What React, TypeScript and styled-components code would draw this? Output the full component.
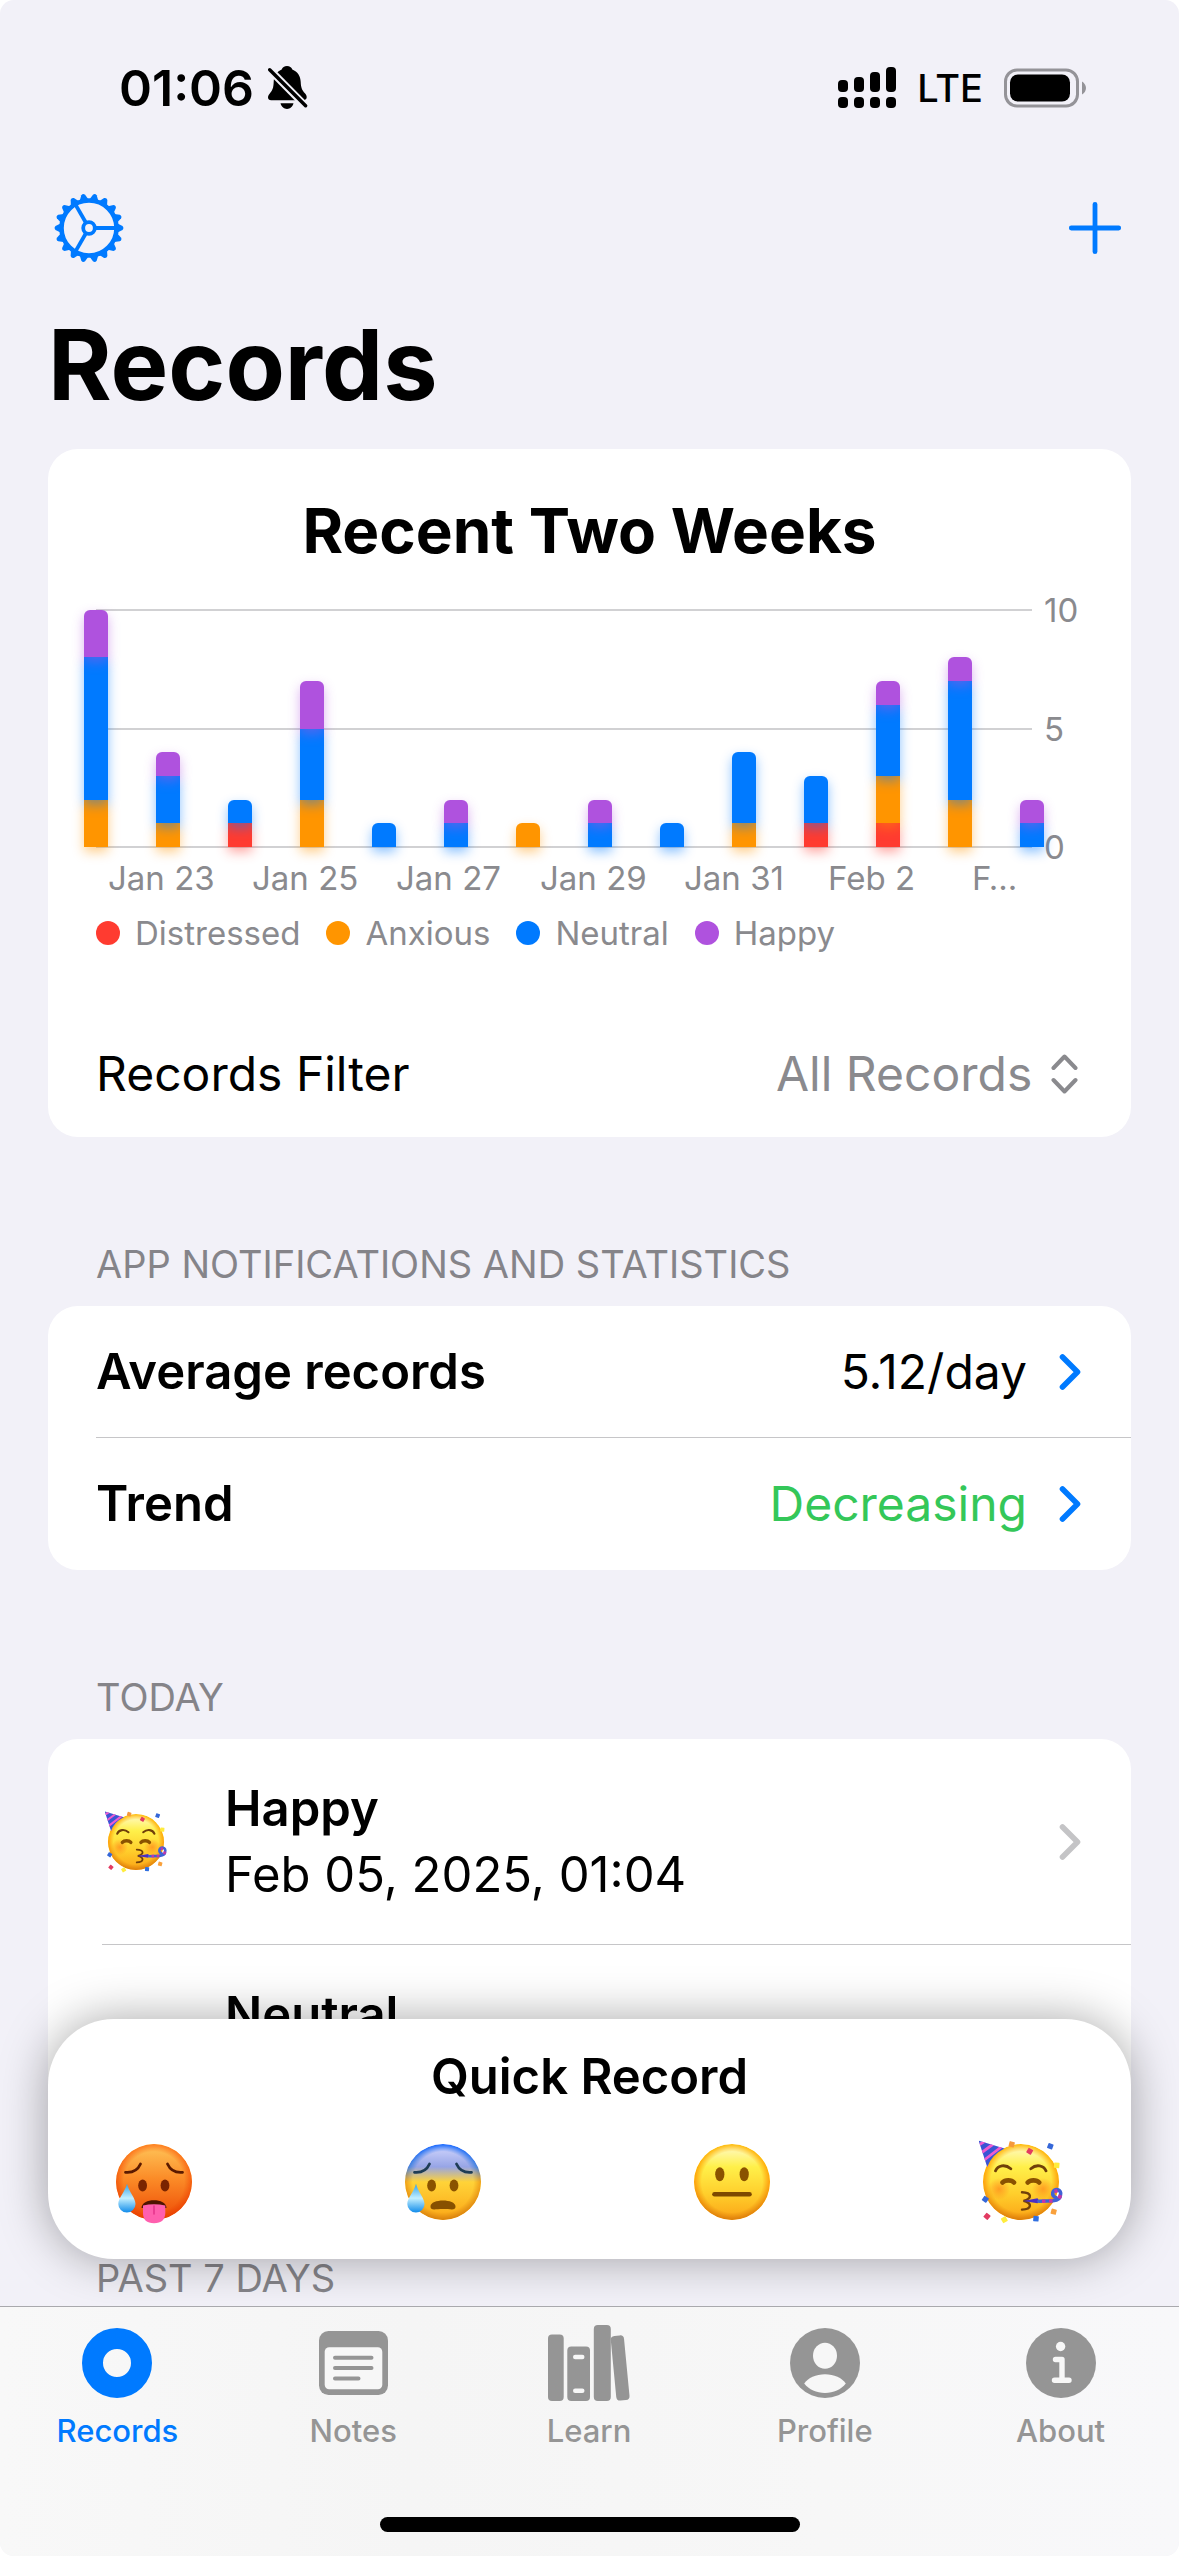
import React, { useId } from "react";
import styled, { createGlobalStyle } from "styled-components";

const color = {
  page: "#f2f1f8",
  card: "#ffffff",
  ink: "#000000",
  secondary: "#8a8a8e",
  tint: "#007aff",
  green: "#34c759",
  line: "#c6c6c8",
  chevron: "#c4c4c6",
  tab: "#959595",
  bar: "#f7f7f7",
};

const GlobalStyle = createGlobalStyle`
  * { box-sizing: border-box; }
  body {
    margin: 0;
    background: #ffffff;
    font-family: Inter, "Liberation Sans", sans-serif;
    color: ${color.ink};
  }
  h1, h2, p { margin: 0; }
  svg { display: block; flex: none; }
`;

const Screen = styled.div`
  position: relative;
  height: 100vh;
  overflow: hidden;
  border-radius: 14px;
  background: ${color.page};
`;

const StatusBar = styled.div`
  display: flex;
  align-items: center;
  justify-content: space-between;
  height: 176px;
  padding: 0 93px 0 119px;
`;

const StatusGroup = styled.div<{ $gap: number }>`
  display: flex;
  align-items: center;
  gap: ${(p) => p.$gap}px;
`;

const Clock = styled.span`
  font-size: 50px;
  font-weight: 600;
  line-height: 60px;
`;

const Carrier = styled.span`
  font-size: 38px;
  font-weight: 500;
  line-height: 60px;
`;

const Toolbar = styled.div`
  display: flex;
  align-items: center;
  justify-content: space-between;
  height: 104px;
  padding: 0 54px;
`;

const IconButton = styled.button`
  display: flex;
  padding: 0;
  border: 0;
  background: none;
  color: ${color.tint};
  cursor: pointer;
`;

const PageTitle = styled.h1`
  margin: 0 48px;
  padding: 25px 0 24px;
  font-size: 97px;
  font-weight: 700;
  line-height: 120px;
`;

const Card = styled.section`
  margin: 0 48px;
  border-radius: 30px;
  background: ${color.card};
`;

const ChartBlock = styled.div`
  padding: 42px 36px 58px;
`;

const ChartTitle = styled.h2`
  margin-bottom: 39px;
  font-size: 62px;
  font-weight: 700;
  line-height: 80px;
  text-align: center;
`;

const ChartGrid = styled.div`
  display: grid;
  grid-template-columns: 1fr 51px;
`;

const Plot = styled.div`
  display: grid;
  height: 237px;
  > * { grid-area: 1 / 1; }
`;

const GridLines = styled.div`
  display: flex;
  flex-direction: column;
  justify-content: space-between;
  margin: -1px 12px;
`;

const GridLine = styled.div`
  height: 2px;
  background: #d1d1d3;
`;

const Bars = styled.div`
  display: flex;
  align-items: flex-end;
  justify-content: space-between;
`;

const Bar = styled.div`
  display: flex;
  flex-direction: column-reverse;
  isolation: isolate;
  width: 24px;
`;

const Segment = styled.div<{ $fill: string; $glow: string; $level: number }>`
  z-index: ${(p) => p.$level};
  background: ${(p) => p.$fill};
  box-shadow: 0 5px 12px ${(p) => p.$glow};
  &:last-child { border-radius: 6px 6px 0 0; }
`;

const YAxis = styled.div`
  display: flex;
  flex-direction: column;
  justify-content: space-between;
  margin: -20px 0;
  color: ${color.secondary};
  font-size: 33px;
  line-height: 40px;
`;

const XAxis = styled.div`
  display: grid;
  grid-template-columns: repeat(13, 1fr);
  margin: 11px 12px 0;
  color: ${color.secondary};
  font-size: 33px;
  line-height: 40px;
`;

const XLabel = styled.span<{ $span: number }>`
  grid-column: span ${(p) => p.$span};
  padding-left: 12px;
  white-space: nowrap;
`;

const Legend = styled.div`
  display: flex;
  gap: 26px;
  margin: 15px 12px 0;
`;

const LegendItem = styled.span`
  display: flex;
  align-items: center;
  gap: 15px;
  color: ${color.secondary};
  font-size: 33px;
  line-height: 40px;
`;

const Dot = styled.span<{ $fill: string }>`
  width: 24px;
  height: 24px;
  border-radius: 50%;
  background: ${(p) => p.$fill};
`;

const FilterRow = styled.div`
  display: flex;
  align-items: center;
  justify-content: space-between;
  height: 126px;
  padding: 0 53px 0 48px;
  font-size: 48px;
  line-height: 60px;
`;

const SelectBox = styled.span`
  display: flex;
  align-items: center;
  gap: 18px;
  color: ${color.secondary};
`;

const Select = styled.select`
  appearance: none;
  padding: 0;
  border: 0;
  background: none;
  color: inherit;
  font: inherit;
`;

const SectionHeader = styled.h2`
  padding: 103px 96px 18px;
  color: #858489;
  font-size: 38px;
  font-weight: 400;
  line-height: 48px;
`;

const StatRow = styled.a`
  display: flex;
  align-items: center;
  height: 132px;
  margin-left: 48px;
  padding-right: 50px;
  color: ${color.ink};
  font-size: 48px;
  line-height: 60px;
  text-decoration: none;
  &:not(:last-child) { border-bottom: 1px solid ${color.line}; }
`;

const StatName = styled.span`
  flex: 1;
  font-size: 49px;
  font-weight: 600;
`;

const StatValue = styled.span<{ $color?: string }>`
  margin-right: 32px;
  color: ${(p) => p.$color ?? color.ink};
`;

const RecordRow = styled.a`
  display: flex;
  align-items: center;
  height: 206px;
  margin-left: 54px;
  padding: 0 50px 0 3px;
  color: ${color.ink};
  text-decoration: none;
  &:not(:last-child) { border-bottom: 1px solid ${color.line}; }
`;

const RecordText = styled.span`
  display: flex;
  flex: 1;
  flex-direction: column;
  min-height: 132px;
  margin-left: 58px;
  font-size: 49px;
  line-height: 66px;
`;

const RecordName = styled.span`
  font-weight: 600;
`;

const Dock = styled.div`
  position: absolute;
  right: 0;
  bottom: 0;
  left: 0;
`;

const QuickCard = styled.section`
  margin: 0 48px 47px;
  height: 240px;
  padding-top: 28px;
  border-radius: 66px;
  background: ${color.card};
  box-shadow: 0 0 48px rgba(0, 0, 0, 0.35);
`;

const QuickTitle = styled.h2`
  font-size: 49px;
  font-weight: 600;
  line-height: 60px;
  text-align: center;
`;

const QuickChoices = styled.div`
  display: flex;
  justify-content: space-between;
  padding: 33px 68px 0 64px;
`;

const TabBar = styled.div`
  height: 250px;
  border-top: 1px solid #a9a9ad;
  background: linear-gradient(90deg, #f8f8f8, #f5f5f5 35%, #f7f7f7 70%, #f8f8fa);
`;

const Tabs = styled.nav`
  display: grid;
  grid-template-columns: repeat(5, 1fr);
`;

const Tab = styled.a<{ $active?: boolean }>`
  display: flex;
  flex-direction: column;
  align-items: center;
  padding: 16px 1px 0 0;
  color: ${(p) => (p.$active ? color.tint : color.tab)};
  font-size: 31px;
  font-weight: 500;
  line-height: 40px;
  text-decoration: none;
`;

const TabIcon = styled.span`
  display: flex;
  align-items: center;
  height: 80px;
  margin-bottom: 8px;
`;

const HomeIndicator = styled.div`
  width: 420px;
  height: 15px;
  margin: 66px auto 0;
  border-radius: 8px;
  background: #000;
`;

/* ---------- data ---------- */

type Mood = "distressed" | "anxious" | "neutral" | "happy";

const moods: { key: Mood; label: string; fill: string; glow: string }[] = [
  { key: "distressed", label: "Distressed", fill: "#ff3b30", glow: "rgba(255,59,48,.45)" },
  { key: "anxious", label: "Anxious", fill: "#ff9500", glow: "rgba(255,149,0,.45)" },
  { key: "neutral", label: "Neutral", fill: "#007aff", glow: "rgba(0,122,255,.45)" },
  { key: "happy", label: "Happy", fill: "#af52de", glow: "rgba(175,82,222,.45)" },
];

// One entry per day, counts in the order of `moods`.
const days = [
  [0, 2, 6, 2],
  [0, 1, 2, 1],
  [1, 0, 1, 0],
  [0, 2, 3, 2],
  [0, 0, 1, 0],
  [0, 0, 1, 1],
  [0, 1, 0, 0],
  [0, 0, 1, 1],
  [0, 0, 1, 0],
  [0, 1, 3, 0],
  [1, 0, 2, 0],
  [1, 2, 3, 1],
  [0, 2, 5, 1],
  [0, 0, 1, 1],
];

const MAX_COUNT = 10;
const PLOT_HEIGHT = 237;

const dateLabels = ["Jan 23", "Jan 25", "Jan 27", "Jan 29", "Jan 31", "Feb 2", "F…"];

/* ---------- icons ---------- */

const BellOff = () => (
  <svg width="40" height="44" viewBox="0 0 40 44">
    <path
      d="M19 0c2.600 0 4.600 1.500 5.300 3.400 5.300 2 8.200 6.800 8.400 12.300.2 6.300 1.500 8.500 4.200 11.600 1.300 1.500 1.800 2.700 1.800 4 0 1.700-1.300 2.900-3.400 2.900H3.200C1.200 34.200 0 33 0 31.400c0-1.500.6-2.600 1.800-4 2.600-3 3.700-5.300 3.900-11.700.2-5.500 2.900-10.300 8-12.300C14.400 1.500 16.400 0 19 0Z"
      fill="#000"
    />
    <path d="M12.500 37.300h13c-.8 3.400-3.300 5.600-6.500 5.600s-5.700-2.200-6.500-5.600Z" fill="#000" />
    <path d="M0 2 40 42.500" stroke={color.page} strokeWidth="7.500" />
    <path d="M1.700 3.800 37.600 39.800" stroke="#000" strokeWidth="3.400" strokeLinecap="round" />
  </svg>
);

const Signal = () => (
  <svg width="58" height="42" viewBox="0 0 58 42" fill="#000">
    {[13, 10, 5, 0].map((top, i) => (
      <g key={top}>
        <rect x={i * 16} y={top} width="10" height={25 - top} rx="4" />
        <rect x={i * 16} y="30" width="10" height="11" rx="4" />
      </g>
    ))}
  </svg>
);

const Battery = () => (
  <svg width="82" height="40" viewBox="0 0 82 40">
    <rect x="1.500" y="2" width="72" height="36" rx="11.500" fill="none" stroke="#949398" strokeWidth="3" />
    <rect x="6" y="6.500" width="60" height="27" rx="8" fill="#000" />
    <path d="M78 13.500c2.500 1.500 4 4 4 6.500s-1.500 5-4 6.500Z" fill="#949398" />
  </svg>
);

const Gear = () => (
  <svg width="70" height="70" viewBox="-35 -35 70 70" fill="none" stroke="currentColor">
    <circle r="27.500" strokeWidth="4.600" />
    <circle r="5.800" strokeWidth="3.800" />
    {[0, 120, 240].map((a) => (
      <path key={a} d="M7 0H27" strokeWidth="3.800" transform={`rotate(${a})`} />
    ))}
    {Array.from({ length: 18 }, (_, i) => (
      <path
        key={i}
        d="M28.500-4.400 33.500-1.900Q35.300 0 33.500 1.900L28.500 4.400Z"
        fill="currentColor"
        stroke="none"
        transform={`rotate(${i * 20})`}
      />
    ))}
  </svg>
);

const Plus = () => (
  <svg width="60" height="60" viewBox="-30 -30 60 60">
    <path d="M-23.700 0H23.700M0-23.700V23.700" stroke="currentColor" strokeWidth="4.800" strokeLinecap="round" />
  </svg>
);

const UpDown = () => (
  <svg width="27" height="40" viewBox="0 0 27 40" fill="none" stroke="currentColor" strokeWidth="4" strokeLinecap="round" strokeLinejoin="round">
    <path d="M2.500 14 13.500 2.500 24.500 14M2.500 26 13.500 37.500 24.500 26" />
  </svg>
);

const Chevron = ({ stroke }: { stroke: string }) => (
  <svg width="22" height="38" viewBox="0 0 22 38" fill="none" stroke={stroke} strokeWidth="5.600" strokeLinecap="round" strokeLinejoin="round">
    <path d="M3.500 4 18.500 19 3.500 34" />
  </svg>
);

const RecordsIcon = () => (
  <svg width="70" height="70" viewBox="0 0 70 70">
    <circle cx="35" cy="35" r="24.500" fill="none" stroke="currentColor" strokeWidth="21" />
  </svg>
);

const NotesIcon = () => (
  <svg width="69" height="64" viewBox="0 0 69 64">
    <rect width="69" height="64" rx="9.500" fill="currentColor" />
    <rect x="5.700" y="16.300" width="57.600" height="42" rx="4.500" fill={color.bar} />
    <path d="M16 26.700H52.500M16 37H52.500M16 47.500H39.500" stroke="currentColor" strokeWidth="4" strokeLinecap="round" />
  </svg>
);

const LearnIcon = () => (
  <svg width="82" height="76" viewBox="0 0 82 76" fill="currentColor">
    <rect y="9.500" width="15.700" height="66.500" rx="4" />
    <rect x="19.300" y="21.500" width="22.700" height="54.500" rx="4" />
    <rect x="45.800" width="17" height="76" rx="4" />
    <rect x="65.500" y="10.500" width="13.300" height="65" rx="4" transform="rotate(-5.500 72 43)" />
    <rect x="25" y="29.800" width="11.500" height="4.400" rx="2.200" fill={color.bar} />
    <rect x="25" y="63.600" width="11.500" height="4.400" rx="2.200" fill={color.bar} />
  </svg>
);

const ProfileIcon = () => (
  <svg width="70" height="70" viewBox="0 0 70 70">
    <circle cx="35" cy="35" r="35" fill="currentColor" />
    <ellipse cx="35" cy="27.800" rx="12" ry="13" fill={color.bar} />
    <path d="M14.200 55.500C18 50 26 46.300 35 46.300S52 50 55.800 55.500C51 61.500 43.500 65 35 65S19 61.500 14.200 55.500Z" fill={color.bar} />
  </svg>
);

const AboutIcon = () => (
  <svg width="70" height="70" viewBox="0 0 70 70">
    <circle cx="35" cy="35" r="35" fill="currentColor" />
    <circle cx="34.600" cy="18.500" r="4.700" fill={color.bar} />
    <path d="M29.500 31.500H36V52.300M28.500 52.300H43" fill="none" stroke={color.bar} strokeWidth="5.400" strokeLinecap="round" strokeLinejoin="round" />
  </svg>
);

/* ---------- mood faces ---------- */

const faceStops: Record<Mood, [string, string][]> = {
  distressed: [["0", "#ffc65a"], [".45", "#fb8c28"], ["1", "#ee4a05"]],
  anxious: [["0", "#d5d9ff"], [".3", "#97a5e6"], [".5", "#ffd338"], ["1", "#fba616"]],
  neutral: [["0", "#fffbd0"], [".3", "#fff04a"], [".65", "#ffcf2c"], ["1", "#fba316"]],
  happy: [["0", "#fffbd0"], [".3", "#fff04a"], [".65", "#ffcf2c"], ["1", "#fba316"]],
};

const rimStops: Record<Mood, [string, string][]> = {
  distressed: [["0", "#ff7a20"], ["1", "#e83e00"]],
  anxious: [["0", "#0a62ff"], [".3", "#3f82dd"], [".5", "#f09f1a"], ["1", "#d57f0e"]],
  neutral: [["0", "#ffb700"], [".5", "#ff9d0c"], ["1", "#d97c0b"]],
  happy: [["0", "#ffb700"], [".5", "#ff9d0c"], ["1", "#d97c0b"]],
};

const confetti: [number, number, string, number][] = [
  [32.7, 4.3, "#f5993c", 15],
  [50.7, 11.3, "#e23b62", 30],
  [71.3, 6.3, "#3567d8", 20],
  [77.7, 25.3, "#ffec3d", 5],
  [6.3, 59.3, "#3567d8", 35],
  [8, 76.3, "#e23b62", 40],
  [25.3, 79.7, "#ffec3d", 60],
  [57, 78.7, "#2f6fe0", 5],
  [74.7, 71.7, "#f9a13c", 15],
];

const Drop = ({ fill }: { fill: string }) => (
  <path d="M15 43.800C17 52 23.500 58 23.500 64A8.600 8.600 0 0 1 6.300 64C6.300 58 13 52 15 43.800Z" fill={fill} />
);

const WorriedBrows = ({ stroke }: { stroke: string }) => (
  <path
    d="M13.500 32.300C21 33 26 29.500 28.500 24M55.500 24C58 29.500 63 33 70.500 32.300"
    fill="none"
    stroke={stroke}
    strokeWidth="2.800"
    strokeLinecap="round"
  />
);

const Face = ({ mood, size }: { mood: Mood; size: number }) => {
  const id = useId();
  const ref = (name: string) => `url(#${id}${name})`;
  return (
    <svg width={size} height={size} viewBox="0 0 84 84" role="img" aria-label={mood}>
      <defs>
        <linearGradient id={`${id}face`} x2="0" y2="1">
          {faceStops[mood].map(([o, c]) => <stop key={o} offset={o} stopColor={c} />)}
        </linearGradient>
        <linearGradient id={`${id}rim`} x2="0" y2="1">
          {rimStops[mood].map(([o, c]) => <stop key={o} offset={o} stopColor={c} />)}
        </linearGradient>
        <radialGradient id={`${id}fade`}>
          <stop offset=".8" stopColor="#fff" stopOpacity="0" />
          <stop offset="1" stopColor="#fff" />
        </radialGradient>
        <mask id={`${id}edge`}>
          <circle cx="42" cy="42" r="38" fill={ref("fade")} />
        </mask>
        <linearGradient id={`${id}drop`} x2="0" y2="1">
          <stop offset="0" stopColor="#2f9fe8" />
          <stop offset=".5" stopColor="#c2efff" />
          <stop offset="1" stopColor="#0f8bea" />
        </linearGradient>
        <radialGradient id={`${id}blush`}>
          <stop offset="0" stopColor="#ff7a18" stopOpacity=".6" />
          <stop offset="1" stopColor="#ff7a18" stopOpacity="0" />
        </radialGradient>
        <clipPath id={`${id}hat`}>
          <path d="M-.3.700 25.500 8.600Q13 14.500 8.200 27Z" />
        </clipPath>
      </defs>
      <circle cx="42" cy="42" r="38" fill={ref("face")} />
      <circle cx="42" cy="42" r="38" fill={ref("rim")} mask={ref("edge")} />

      {mood === "distressed" && (
        <>
          <WorriedBrows stroke="#5b1a00" />
          <ellipse cx="30.600" cy="45.500" rx="4.400" ry="6" fill="#7a2400" />
          <ellipse cx="53" cy="45.500" rx="4.400" ry="6" fill="#7a2400" />
          <path d="M29.500 68C29.500 57.500 54.500 57.500 54.500 68Z" fill="#4e1400" />
          <path d="M31 65.500Q42 63 53.300 65.500V73Q53 83.200 42 83.200T31 73Z" fill="#ff5fae" />
          <path d="M42 66V74" stroke="#e6358c" strokeWidth="1.600" strokeLinecap="round" />
          <Drop fill={ref("drop")} />
        </>
      )}

      {mood === "anxious" && (
        <>
          <WorriedBrows stroke="#1f3d55" />
          <ellipse cx="30.600" cy="45.500" rx="4.400" ry="6" fill="#8a5200" />
          <ellipse cx="53" cy="45.500" rx="4.400" ry="6" fill="#8a5200" />
          <path d="M29.500 66.500C29.500 58.500 54.500 58.500 54.500 66.500 54.500 71 50 69 42 69S29.500 71 29.500 66.500Z" fill="#875000" />
          <Drop fill={ref("drop")} />
        </>
      )}

      {mood === "neutral" && (
        <>
          <ellipse cx="29.800" cy="34.200" rx="4.600" ry="7" fill="#8a5200" />
          <ellipse cx="54.200" cy="34.200" rx="4.600" ry="7" fill="#8a5200" />
          <path d="M24.500 54.200H59.500" stroke="#7d4800" strokeWidth="4.600" strokeLinecap="round" />
        </>
      )}

      {mood === "happy" && (
        <>
          <circle cx="20" cy="49" r="11" fill={ref("blush")} />
          <circle cx="64" cy="49" r="11" fill={ref("blush")} />
          <g clipPath={ref("hat")}>
            <rect x="-2" width="30" height="30" fill="#3a55d4" />
            <path d="M-2 6 8 0M0 14.500 17 2M2 22.500 26 4M5 31 30 8" stroke="#f05bd0" strokeWidth="2.800" />
          </g>
          <path
            d="M16.500 30.800C19 25.500 26 23.700 31.800 28.800M51.800 28.800C57.500 23.700 64.500 25.500 67 30.800"
            fill="none"
            stroke="#70400a"
            strokeWidth="2.800"
            strokeLinecap="round"
          />
          <path
            d="M23.500 42.500C26 39.600 32.500 39.600 35 42.500M48.700 42.500C51.200 39.600 57.700 39.600 60.200 42.500"
            fill="none"
            stroke="#8a5200"
            strokeWidth="4.600"
            strokeLinecap="round"
          />
          <path
            d="M43 52.200C53 52.500 53.500 58.500 44.500 60.800 53.500 63 53 69.300 43 69.600"
            fill="none"
            stroke="#70400a"
            strokeWidth="2.400"
            strokeLinecap="round"
          />
          <path d="M44 61 58.500 58.300Q61 60.800 58.500 63.300Z" fill="#4a2fc4" />
          <path d="M60 61.300 74 60.800Q81.500 60 81.500 54.800A4 4 0 1 0 77 57.500" fill="none" stroke="#3f62d6" strokeWidth="3.600" strokeLinecap="round" />
          <path d="M63 61.200H66.500M70 61H73.500M80 58.500 81.500 55M78.500 50.600 75.500 51.500" stroke="#c238a8" strokeWidth="3.600" />
          {confetti.map(([x, y, fill, turn]) => (
            <rect key={`${x}-${y}`} x={x - 2.7} y={y - 2.7} width="5.400" height="5.400" rx=".6" fill={fill} transform={`rotate(${turn} ${x} ${y})`} />
          ))}
        </>
      )}
    </svg>
  );
};

/* ---------- page ---------- */

const tabs = [
  { label: "Records", Icon: RecordsIcon },
  { label: "Notes", Icon: NotesIcon },
  { label: "Learn", Icon: LearnIcon },
  { label: "Profile", Icon: ProfileIcon },
  { label: "About", Icon: AboutIcon },
];

const records: { name: string; mood: Mood; date?: string }[] = [
  { name: "Happy", mood: "happy", date: "Feb 05, 2025, 01:04" },
  { name: "Neutral", mood: "neutral" },
];

const MoodChart = () => (
  <ChartBlock>
    <ChartTitle>Recent Two Weeks</ChartTitle>
    <ChartGrid>
      <Plot>
        <GridLines>
          <GridLine />
          <GridLine />
          <GridLine />
        </GridLines>
        <Bars>
          {days.map((counts, day) => (
            <Bar key={day}>
              {counts.map((n, i) =>
                n > 0 ? (
                  <Segment
                    key={moods[i].key}
                    $fill={moods[i].fill}
                    $glow={moods[i].glow}
                    $level={i}
                    style={{ height: (n / MAX_COUNT) * PLOT_HEIGHT }}
                  />
                ) : null
              )}
            </Bar>
          ))}
        </Bars>
      </Plot>
      <YAxis>
        <span>10</span>
        <span>5</span>
        <span>0</span>
      </YAxis>
      <XAxis>
        {dateLabels.map((label, i) => (
          <XLabel key={label} $span={i < 6 ? 2 : 1}>{label}</XLabel>
        ))}
      </XAxis>
    </ChartGrid>
    <Legend>
      {moods.map((m) => (
        <LegendItem key={m.key}>
          <Dot $fill={m.fill} />
          {m.label}
        </LegendItem>
      ))}
    </Legend>
  </ChartBlock>
);

export default function App() {
  return (
    <>
      <GlobalStyle />
      <Screen>
        <StatusBar>
          <StatusGroup $gap={14}>
            <Clock>01:06</Clock>
            <BellOff />
          </StatusGroup>
          <StatusGroup $gap={21}>
            <Signal />
            <Carrier>LTE</Carrier>
            <Battery />
          </StatusGroup>
        </StatusBar>

        <Toolbar>
          <IconButton type="button" aria-label="Settings"><Gear /></IconButton>
          <IconButton type="button" aria-label="Add record"><Plus /></IconButton>
        </Toolbar>

        <main>
          <PageTitle>Records</PageTitle>

          <Card>
            <MoodChart />
            <FilterRow>
              <label htmlFor="records-filter">Records Filter</label>
              <SelectBox>
                <Select id="records-filter" defaultValue="all">
                  <option value="all">All Records</option>
                </Select>
                <UpDown />
              </SelectBox>
            </FilterRow>
          </Card>

          <SectionHeader>APP NOTIFICATIONS AND STATISTICS</SectionHeader>
          <Card>
            <StatRow href="#average">
              <StatName>Average records</StatName>
              <StatValue>5.12/day</StatValue>
              <Chevron stroke={color.tint} />
            </StatRow>
            <StatRow href="#trend">
              <StatName>Trend</StatName>
              <StatValue $color={color.green}>Decreasing</StatValue>
              <Chevron stroke={color.tint} />
            </StatRow>
          </Card>

          <SectionHeader>TODAY</SectionHeader>
          <Card>
            {records.map((r) => (
              <RecordRow key={r.name} href={`#${r.mood}`}>
                <Face mood={r.mood} size={62} />
                <RecordText>
                  <RecordName>{r.name}</RecordName>
                  {r.date && <span>{r.date}</span>}
                </RecordText>
                <Chevron stroke={color.chevron} />
              </RecordRow>
            ))}
          </Card>

          <SectionHeader>PAST 7 DAYS</SectionHeader>
        </main>

        <Dock>
          <QuickCard>
            <QuickTitle>Quick Record</QuickTitle>
            <QuickChoices>
              {moods.map((m) => (
                <IconButton key={m.key} type="button" aria-label={m.label}>
                  <Face mood={m.key} size={84} />
                </IconButton>
              ))}
            </QuickChoices>
          </QuickCard>
          <TabBar>
            <Tabs>
              {tabs.map(({ label, Icon }, i) => (
                <Tab key={label} href={`#${label.toLowerCase()}`} $active={i === 0}>
                  <TabIcon><Icon /></TabIcon>
                  {label}
                </Tab>
              ))}
            </Tabs>
            <HomeIndicator />
          </TabBar>
        </Dock>
      </Screen>
    </>
  );
}
